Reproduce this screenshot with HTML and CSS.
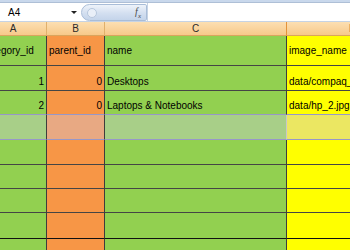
FILE: index.html
```
<!DOCTYPE html>
<html>
<head>
<meta charset="utf-8">
<link rel="stylesheet" href="styles.css">
</head>
<body>
<div class="app">
  <div class="topstrip"></div>
  <div class="formulabar">
    <div class="namebox">
      <span class="ref">A4</span>
      <span class="arrow"></span>
    </div>
    <div class="fxpill">
      <span class="knob"></span>
      <span class="fx">f<sub>x</sub></span>
    </div>
    <div class="formula"></div>
  </div>
  <div class="sheet">
    <div class="hdr">A</div>
    <div class="hdr">B</div>
    <div class="hdr hdr-c">C</div>
    <div class="hdr">D</div>

    <div class="c green mid">category_id</div>
    <div class="c orange mid">parent_id</div>
    <div class="c green mid">name</div>
    <div class="c yellow mid">image_name</div>

    <div class="c green num">1</div>
    <div class="c orange num">0</div>
    <div class="c green">Desktops</div>
    <div class="c yellow">data/compaq_presario.jpg</div>

    <div class="c green num presel">2</div>
    <div class="c orange num presel">0</div>
    <div class="c green presel">Laptops &amp; Notebooks</div>
    <div class="c yellow presel">data/hp_2.jpg</div>

    <div class="c green sel"></div>
    <div class="c orange sel"></div>
    <div class="c green sel selc"></div>
    <div class="c yellow sel"></div>

    <div class="c green"></div><div class="c orange"></div><div class="c green"></div><div class="c yellow"></div>
    <div class="c green"></div><div class="c orange"></div><div class="c green"></div><div class="c yellow"></div>
    <div class="c green"></div><div class="c orange"></div><div class="c green"></div><div class="c yellow"></div>
    <div class="c green dark"></div><div class="c orange dark"></div><div class="c green dark"></div><div class="c yellow dark"></div>
    <div class="c green"></div><div class="c orange"></div><div class="c green"></div><div class="c yellow"></div>
  </div>
</div>
</body>
</html>
```
FILE: styles.css
```
html, body {
  margin: 0;
  padding: 0;
  background: #ffffff;
}
.app {
  width: 350px;
  height: 250px;
  overflow: hidden;
  font-family: "Liberation Sans", Arial, sans-serif;
  font-size: 10px;
  color: #000;
}
.topstrip {
  height: 2px;
  background: #c9d8ec;
  border-bottom: 1px solid #aebfd6;
}
.formulabar {
  height: 18px;
  display: flex;
  align-items: stretch;
  background: #fff;
  border-bottom: 1px solid #c6d3e4;
}
.namebox {
  width: 81px;
  display: flex;
  align-items: center;
  justify-content: space-between;
  padding: 0 4px 0 8px;
  box-sizing: border-box;
}
.ref {
  font-size: 10px;
}
.arrow {
  width: 0;
  height: 0;
  border-left: 3px solid transparent;
  border-right: 3px solid transparent;
  border-top: 3px solid #222;
}
.fxpill {
  width: 66px;
  margin: 1px 0 0 0;
  border-radius: 9px 2px 2px 9px;
  background: linear-gradient(#eef3fa, #d3dff0 55%, #c4d4ea);
  border: 1px solid #a9bdd8;
  box-sizing: border-box;
  display: flex;
  align-items: center;
  justify-content: space-between;
  padding: 0 5px 0 5px;
}
.knob {
  width: 8px;
  height: 8px;
  border-radius: 50%;
  background: #e9eff8;
  border: 1px solid #b7c7dd;
}
.fx {
  font-family: "Liberation Serif", serif;
  font-style: italic;
  font-size: 10px;
  color: #4a4a4a;
}
.fx sub {
  font-size: 7px;
}
.formula {
  flex: 1;
  border-left: 1px solid #c6d3e4;
}
.sheet {
  margin-left: -20px;
  display: grid;
  grid-template-columns: 67px 58px 182px 132px;
  grid-template-rows: 14px 30px 25px 24px 25px 25px 24px 24px 26px 25px;
}
.hdr {
  background: linear-gradient(#fcdfb2, #f7c98a);
  border-right: 1px solid #e0b06c;
  border-bottom: 1px solid #d9a55e;
  text-align: center;
  line-height: 13px;
  color: #2a2a2a;
  font-size: 10px;
}
.hdr-c {
  border-right-color: #e3933a;
}
.c {
  border-right: 1px solid #3d3d3d;
  border-bottom: 1px solid #454545;
  padding: 0 2px;
  display: flex;
  align-items: flex-end;
  padding-bottom: 3px;
  white-space: nowrap;
  overflow: hidden;
  box-sizing: border-box;
}
.mid {
  align-items: center;
  padding-bottom: 0;
}
.num {
  justify-content: flex-end;
}
.green { background: #92d050; }
.orange { background: #f79646; }
.yellow { background: #ffff00; }
.sel.green { background: #a8cf88; }
.sel.orange { background: #e8a983; }
.sel.yellow { background: #ebe762; }
.sel, .presel { border-bottom-color: #9797c9; }
.selc { border-right-color: #c8c8c8; }
.dark { border-bottom-color: #111; }
```
